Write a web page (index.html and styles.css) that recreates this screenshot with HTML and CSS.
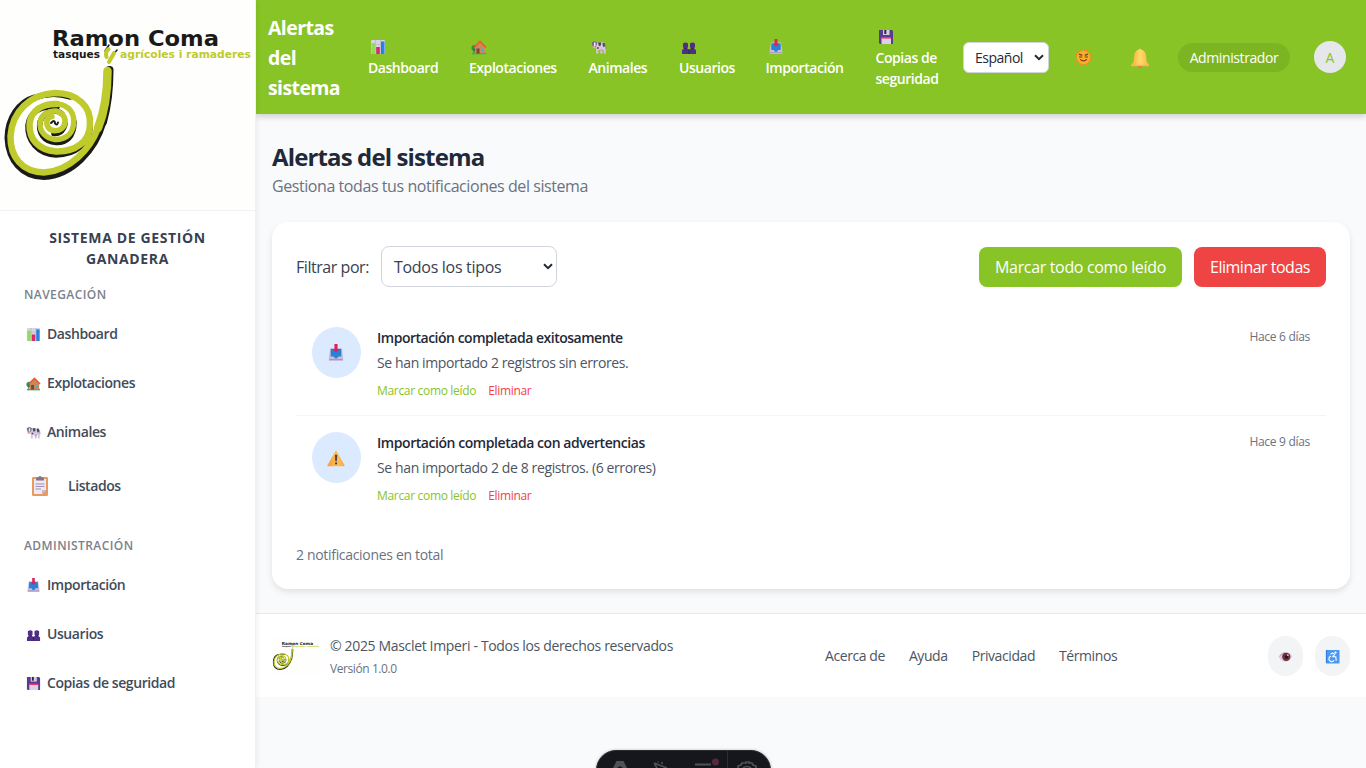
FILE: index.html
```html
<!DOCTYPE html>
<html lang="es">
<head>
<meta charset="utf-8">
<title>Alertas del sistema</title>
<link rel="stylesheet" href="styles.css">
</head>
<body>
<svg class="defs" width="0" height="0" aria-hidden="true">
  <defs>
    <linearGradient id="gold" x1="0" x2="1"><stop offset="0" stop-color="#f5a83c"/><stop offset=".5" stop-color="#ffdb68"/><stop offset="1" stop-color="#fbb34a"/></linearGradient>
    <linearGradient id="amber" x1="0" x2="1"><stop offset="0" stop-color="#f79a3e"/><stop offset=".6" stop-color="#ffc050"/><stop offset="1" stop-color="#fba445"/></linearGradient>
    <linearGradient id="blue" x1="0" x2="1"><stop offset="0" stop-color="#2f78cf"/><stop offset="1" stop-color="#1d8df0"/></linearGradient>
  </defs>
  <symbol id="chart" viewBox="0 0 16 16"><rect x="1" y="1" width="14" height="14" rx="1" fill="#d8d2e2"/><path d="M1 5.500h14M1 10h14M5.500 1v14M10.500 1v14" stroke="#b9b0c8" stroke-width=".6"/><rect x="1.500" y="4" width="3.500" height="11" fill="#8fdc5c"/><rect x="6.200" y="8" width="3.600" height="7" fill="#d8286f"/><rect x="11" y="2.500" width="3.500" height="12.500" fill="url(#blue)"/></symbol>
  <symbol id="house" viewBox="0 0 16 16"><circle cx="3.500" cy="9" r="3" fill="#2b8f53"/><path d="M3 10v5" stroke="#7b4d34"/><path d="M1 14.500h14" stroke="#35b26b" stroke-width="1.600"/><path d="M4 7.500 9 3l5 4.500V14H4z" fill="#c98a58"/><path d="M3 8.500 9 2.500l6 6" fill="none" stroke="#f0592b" stroke-width="1.700"/><rect x="5.500" y="9.500" width="3" height="5" fill="#7d4533"/><rect x="10" y="9.500" width="2.800" height="3" fill="#43b2e8"/></symbol>
  <symbol id="cow" viewBox="0 0 16 16"><path d="M5 3.500h8.500l1.200 3.500v7.500h-2V11h-1l-.5 3.500H9.300V11H7.300v3.500H5.200V9.500L4 7z" fill="#d3c8dd"/><path d="M.8 3.500 2.500 2.500h2L6.300 3.500 5.500 6.500 3.800 9 1.800 8z" fill="#776a82"/><path d="M3 3.500h1.500V7H3z" fill="#f4ecf8"/><path d="M1.500 7h2.800v2.200H2z" fill="#e7a0b8"/><path d="M7 3.500h3v2.800L8 7.300zM11.500 4h2.300v3.800H12zM6 8.300h1.800v1.500H6z" fill="#4a4354"/><path d="M14.300 5 15 10" stroke="#8c8098" stroke-width=".8"/><circle cx="10.500" cy="11.200" r="1.100" fill="#e88baf"/></symbol>
  <symbol id="users" viewBox="0 0 16 16"><path d="M2 4.500Q4.500 2.500 7 4.500V8l-.8 1.500L8 10.500l1.800-1L9 8V4.500q2.500-2 5 0V8l-.8 1.500 1.800 1.800V15H1v-3.700l1.800-1.800L2 8z" fill="#4f2f86"/><path d="M8 10.500V15M3.500 9.500h2M10.500 9.500h2" stroke="#2f1a58" stroke-width=".8"/></symbol>
  <symbol id="inbox" viewBox="0 0 16 16"><path d="M3 3.500h10l1.300 8V15H1.700v-3.500z" fill="#c9bddb"/><path d="M3.300 4.500h9.400V11h-2.700l-1 1.700H7L6 11H3.300z" fill="#2383d9"/><path d="M2 13.700h12" stroke="#a897c2"/><path d="M6.600 0h2.800v4.500h1.800L8 7.800 4.800 4.500h1.800z" fill="#dc235e"/></symbol>
  <symbol id="disk" viewBox="0 0 16 16"><path d="M1 1h13l1 1v13H2l-1-1z" fill="#593b91"/><path d="M5 1h6.500v5H5z" fill="#d5cbe0"/><path d="M6.300 1h2v4h-2z" fill="#30234a"/><path d="M3.500 9h9.500v6H3.500z" fill="#ddd0e9"/><path d="M3.500 8h9.500v1.600H3.500z" fill="#f03369"/></symbol>
  <symbol id="clipboard" viewBox="0 0 18 20"><rect x="1" y="1" width="16" height="19" rx="1.300" fill="#e89b61"/><path d="M3 3h12v11l-4 4H3z" fill="#eee9f5"/><path d="M11 18v-4h4z" fill="#c7b5d6"/><path d="M5 3q0-2 2.500-2 1.500-2 3 0Q13 1 13 3v1.500H5z" fill="#807687"/><path d="M4.500 8h9M4.500 10.500h9M4.500 13h5.500" stroke="#9587aa" stroke-width=".9"/></symbol>
  <symbol id="sun" viewBox="0 0 16 16"><circle cx="8" cy="8" r="6.700" fill="none" stroke="#f38b23" stroke-width="2.200" stroke-dasharray="3.600 1.660"/><circle cx="8" cy="8" r="6.300" fill="#fbac2b"/><path d="M3.800 4.800 6.800 6M12.200 4.800 9.200 6M3.800 7.500h3M9.200 7.500h3M4.800 9.800q3.200 2.700 6.400 0" fill="none" stroke="#6e3f1b" stroke-width="1.100"/></symbol>
  <symbol id="bell" viewBox="0 0 20 20"><circle cx="10" cy="18" r="2" fill="#f4686b"/><path d="M9 1.500q1-2 2 0 4.500 1 5 6l.7 6.500 2.300 2.500V18H1v-1.500L3.500 14l.7-6.500q.5-5 4.800-6z" fill="url(#gold)"/><path d="M1 17.500h18" stroke="#ffb45b" stroke-width="1.400"/></symbol>
  <symbol id="warning" viewBox="0 0 18 18"><path d="M9 1.300 17.700 16.500q0 .8-1 .8H1.300q-1 0-1-.8z" fill="url(#amber)"/><path d="M8 5.800h2.200l-.4 6.500H8.300z" fill="#493a58"/><circle cx="9.100" cy="14.400" r="1.100" fill="#493a58"/></symbol>
  <symbol id="eye" viewBox="0 0 16 16"><path d="M1 8.500q1.500-5 7-5T15 8q-2 5.500-7 5.500T1 8.500z" fill="#d9cee3"/><path d="M1.500 8q2-4 6.500-4" fill="none" stroke="#b59bc0"/><circle cx="8.800" cy="8.300" r="4.400" fill="#753036"/><circle cx="9" cy="8.500" r="1.900" fill="#241723"/><circle cx="10.500" cy="6.500" r="1" fill="#e5c9ce"/></symbol>
  <symbol id="wheelchair" viewBox="0 0 16 16"><rect x="1" y="1" width="14.500" height="14.500" rx="1" fill="#4898f4"/><path d="M1.500 1v14" stroke="#337bd3"/><circle cx="11.200" cy="3.800" r="1.200" fill="#fff"/><path d="M6 5.500 8 4.200l2.300 1.500-2 2.600h3.200l.5 4.200M6.500 7.500a3 3 0 1 0 3.200 4.500" fill="none" stroke="#fff" stroke-width="1.200"/></symbol>
  <symbol id="logo" viewBox="0 0 256 210">
    <rect width="255" height="210" fill="#fefefd"/>
    <text class="brand-name" x="52" y="46" textLength="167" lengthAdjust="spacingAndGlyphs">Ramon Coma</text>
    <text class="brand-sub" x="53" y="57.500" textLength="47" lengthAdjust="spacingAndGlyphs">tasques</text>
    <text class="brand-sub brand-green" x="120" y="57.500" textLength="131" lengthAdjust="spacingAndGlyphs">agrícoles i ramaderes</text>
    <g fill="none" stroke-linecap="round" stroke-linejoin="round">
      <path stroke="#1a1a19" stroke-width="8" d="M109.500 70C109.500 86 108 104 103 122"/>
      <path stroke="#1a1a19" stroke-width="7" d="M103 122C95 150 72 175 44 176.500C22 176 9 160 8 138C8 118 20 102 34 98"/>
      <path stroke="#1a1a19" stroke-width="5.500" d="M34 98Q52 91 70 97M90 122C92 144 74 155 56 155C38 154 27 141 28 125C30 111 42 106 57 107M74 122C74 137 66 143 56 142.500C44 142 38 133 40 122C43 112 55 108 62 114M65 124C63 132 58 134 54 133.500"/>
      <path stroke="#bfcb2c" stroke-width="8.500" d="M107.500 71C107.500 88 106 108 98 128"/>
      <path stroke="#bfcb2c" stroke-width="6.500" d="M98 128C90 149 70 171 44 172.500C22 172 10 157 10.500 136C12 112 30 94 55 93C78 93 91 107 90 124C90 142 75 152 56 151.500C38 150 29 139 29.500 124C31 110 43 103.500 57 104"/>
      <path stroke="#bfcb2c" stroke-width="5.500" d="M57 104C70 105 75 114 73.500 125C72 136 63 140 55 139.500C45 138 39.500 131 40 123C41 114 49 110.500 56 111C64 113 67 120 64 126C60 132 51 132 48 127C45 121 48 117 52 116.500"/>
      <path stroke="#1a1a19" stroke-width="2" d="M51 123q4-4 4 .5 2 2.500 3-1"/>
      <path stroke="#1a1a19" stroke-width="1.500" d="M105 51 109 45M112 56 117 50"/>
      <path stroke="#bfcb2c" stroke-width="4" d="M106.500 57Q105 52 108.500 49M109 62 114 53"/>
    </g>
  </symbol>
</svg>

<div class="app">
  <aside class="sidebar">
    <div class="sidebar-logo"><svg width="256" height="210"><use href="#logo"/></svg></div>
    <h2 class="sidebar-title">Sistema de Gestión<br>Ganadera</h2>
    <h3 class="group-label">Navegación</h3>
    <nav class="side-nav">
      <a class="side-link"><svg><use href="#chart"/></svg><span>Dashboard</span></a>
      <a class="side-link"><svg><use href="#house"/></svg><span>Explotaciones</span></a>
      <a class="side-link"><svg><use href="#cow"/></svg><span>Animales</span></a>
      <a class="side-link side-link-large"><svg><use href="#clipboard"/></svg><span>Listados</span></a>
    </nav>
    <h3 class="group-label group-admin">Administración</h3>
    <nav class="side-nav">
      <a class="side-link"><svg><use href="#inbox"/></svg><span>Importación</span></a>
      <a class="side-link"><svg><use href="#users"/></svg><span>Usuarios</span></a>
      <a class="side-link"><svg><use href="#disk"/></svg><span>Copias de seguridad</span></a>
    </nav>
  </aside>

  <div class="content">
    <header class="topbar">
      <div class="topbar-title">Alertas del sistema</div>
      <nav class="top-nav">
        <a class="top-link"><svg><use href="#chart"/></svg><span>Dashboard</span></a>
        <a class="top-link"><svg><use href="#house"/></svg><span>Explotaciones</span></a>
        <a class="top-link"><svg><use href="#cow"/></svg><span>Animales</span></a>
        <a class="top-link"><svg><use href="#users"/></svg><span>Usuarios</span></a>
        <a class="top-link"><svg><use href="#inbox"/></svg><span>Importación</span></a>
        <a class="top-link"><svg><use href="#disk"/></svg><span>Copias de<br>seguridad</span></a>
      </nav>
      <div class="select select-lang"><span>Español</span><svg class="chevron" viewBox="0 0 10 7"><path d="M1 1.200 5 5.200 9 1.200"/></svg></div>
      <svg class="sun"><use href="#sun"/></svg>
      <svg class="bell"><use href="#bell"/></svg>
      <span class="role">Administrador</span>
      <span class="avatar">A</span>
    </header>

    <main class="main">
      <h1 class="page-title">Alertas del sistema</h1>
      <p class="page-subtitle">Gestiona todas tus notificaciones del sistema</p>
      <section class="card">
        <div class="toolbar">
          <span class="filter-label">Filtrar por:</span>
          <div class="select select-type"><span>Todos los tipos</span><svg class="chevron" viewBox="0 0 10 7"><path d="M1 1.200 5 5.200 9 1.200"/></svg></div>
          <button class="btn btn-read">Marcar todo como leído</button>
          <button class="btn btn-delete">Eliminar todas</button>
        </div>
        <article class="notice">
          <div class="notice-icon"><svg><use href="#inbox"/></svg></div>
          <div class="notice-body">
            <h4 class="notice-title">Importación completada exitosamente</h4>
            <p class="notice-text">Se han importado 2 registros sin errores.</p>
            <div class="notice-actions"><a class="read">Marcar como leído</a><a class="delete">Eliminar</a></div>
          </div>
          <time class="notice-time">Hace 6 días</time>
        </article>
        <article class="notice">
          <div class="notice-icon"><svg><use href="#warning"/></svg></div>
          <div class="notice-body">
            <h4 class="notice-title">Importación completada con advertencias</h4>
            <p class="notice-text">Se han importado 2 de 8 registros. (6 errores)</p>
            <div class="notice-actions"><a class="read">Marcar como leído</a><a class="delete">Eliminar</a></div>
          </div>
          <time class="notice-time">Hace 9 días</time>
        </article>
        <p class="total">2 notificaciones en total</p>
      </section>
    </main>

    <footer class="footer">
      <svg class="footer-logo"><use href="#logo"/></svg>
      <div class="legal"><p class="copyright">© 2025 Masclet Imperi - Todos los derechos reservados</p><p class="version">Versión 1.0.0</p></div>
      <nav class="footer-nav"><a>Acerca de</a><a>Ayuda</a><a>Privacidad</a><a>Términos</a></nav>
      <div class="footer-tools"><span class="tool"><svg><use href="#eye"/></svg></span><span class="tool"><svg><use href="#wheelchair"/></svg></span></div>
    </footer>
  </div>
</div>

<div class="dev-bar">
  <svg width="175" height="18" viewBox="0 0 175 18" fill="none">
    <path d="M17 18l3-6q0-1 1-1h6q1 0 1 1l3 6h-4l-3-2-3 2z" fill="#505257"/>
    <path d="M58 13l13 5M58 13l3 5M62 12.500v-1M66 14v-2" stroke="#505257" stroke-width="1.600"/>
    <path d="M99 14.500h16" stroke="#505257" stroke-width="2"/><circle cx="119.500" cy="12" r="3.500" fill="#532b3b"/>
    <path d="M131.500 1v17" stroke="#2c2e33"/>
    <path d="M142 18v-2l3-1 1-2h4v-1h3v1h3l1 2 3 1v2M147 18q4-3 8 0" stroke="#505257" stroke-width="1.700"/>
  </svg>
</div>
</body>
</html>
```

FILE: styles.css
```css
* { box-sizing: border-box; margin: 0; }
body { height: 768px; overflow: hidden; background: #f9fafc; color: #1f2937; font-family: "Open Sans", "Noto Sans", sans-serif; font-size: 14px; line-height: 21px; }
svg { display: block; flex: none; overflow: visible; }
.defs { position: absolute; }
.app { display: flex; height: 768px; }

.sidebar { width: 256px; flex: none; background: #fff; border-right: 1px solid #f0f1f3; box-shadow: 0 0 6px rgba(0,0,0,.09); position: relative; z-index: 2; }
.sidebar-logo { height: 211px; overflow: hidden; border-bottom: 1px solid #f1f2f4; }
.brand-name { font: bold 22px "DejaVu Sans", sans-serif; fill: #1a1a19; }
.brand-sub { font: bold 11px "DejaVu Sans", sans-serif; fill: #1a1a19; }
.brand-green { fill: #bfcb2c; }
.sidebar-title { padding-top: 16px; text-align: center; text-transform: uppercase; font-size: 14px; font-weight: 700; color: #374151; letter-spacing: .63px; line-height: 21px; }
.group-label { margin-top: 17px; padding-left: 24px; font-size: 12px; line-height: 18px; font-weight: 600; text-transform: uppercase; color: #7b818c; letter-spacing: .42px; }
.side-nav { display: flex; flex-direction: column; gap: 4px; padding-top: 8px; }
.side-link { display: flex; align-items: center; gap: 6px; height: 45px; padding-left: 26px; font-weight: 600; color: #414b5a; letter-spacing: -.42px; }
.side-link span { padding-bottom: 2px; }
.side-link svg { width: 15px; height: 15px; }
.side-link-large { height: 54px; gap: 19px; padding-left: 31px; }
.side-link-large svg { width: 18px; height: 20px; }
.group-admin { margin-top: 24px; }

.content { flex: 1; min-width: 0; }
.topbar { display: flex; align-items: center; height: 114px; padding: 0 20px 0 12px; background: #88c425; color: #fff; box-shadow: 0 3px 6px rgba(0,0,0,.16); }
.topbar-title { width: 100px; padding: 2px 20px 0 0; font-size: 19.5px; line-height: 30px; font-weight: 700; letter-spacing: -.6px; flex: none; }
.top-nav { display: grid; grid-template-columns: 101px 119.500px 90.500px 86.500px 110px 87.500px; align-items: center; flex: none; }
.top-link { font-weight: 600; letter-spacing: -.45px; white-space: nowrap; }
.top-link svg { width: 16px; height: 16px; margin: 3px 0 2px 2px; }
.top-link span { display: block; }
.select { display: flex; align-items: center; justify-content: space-between; background: #fff; border: 1px solid #d1d5db; border-radius: 8px; flex: none; }
.select-lang { width: 86px; height: 31px; padding: 0 4px 0 11px; border-radius: 6px; color: #1f2937; letter-spacing: -.5px; }
.chevron { width: 10px; height: 7px; fill: none; stroke: #1f2937; stroke-width: 2; }
.sun { width: 17px; height: 17px; margin-left: 26px; }
.bell { width: 20px; height: 20px; margin-left: 38px; margin-top: 2px; }
.role { width: 112px; height: 29px; margin-left: 28px; border-radius: 15px; background: #7db422; line-height: 29px; text-align: center; letter-spacing: -.4px; }
.avatar { width: 32px; height: 32px; margin-left: 24px; border-radius: 50%; background: #e5e7eb; color: #88c425; line-height: 33px; text-align: center; }

.main { padding: 25px 16px 24px; }
.page-title { font-size: 24px; line-height: 36px; font-weight: 700; letter-spacing: -.87px; }
.page-subtitle { font-size: 16px; line-height: 24px; color: #6b7280; letter-spacing: -.43px; margin-top: -1px; }
.card { margin-top: 24px; height: 367px; padding: 24px; background: #fff; border-radius: 16px; box-shadow: 0 3px 6px rgba(0,0,0,.1); }
.toolbar { display: flex; align-items: center; height: 41px; font-size: 16px; margin-bottom: 24px; }
.filter-label { width: 85px; padding-top: 2px; color: #374151; letter-spacing: -.45px; white-space: nowrap; }
.select-type { width: 176px; height: 41px; padding: 0 3px 0 12px; margin-right: auto; color: #374151; letter-spacing: -.3px; }
.select-type span { padding-top: 2px; }
.btn { height: 40px; margin-left: 12px; padding: 2px 0 0; border: 0; border-radius: 8px; font: inherit; color: #fff; white-space: nowrap; }
.btn-read { width: 203px; background: #88c425; letter-spacing: -.34px; }
.btn-delete { width: 132px; background: #ef4444; letter-spacing: -.5px; }
.notice { display: flex; height: 105px; padding: 16px; border-bottom: 1px solid #f3f4f6; }
.notice + .notice { border-bottom: 0; }
.notice-icon { width: 49px; height: 51px; padding-right: 1px; margin-right: 16px; border-radius: 50%; background: #dbeafe; display: grid; place-items: center; flex: none; }
.notice-icon svg { width: 18px; height: 18px; }
.notice-body { flex: 1; }
.notice-title { font-size: 14px; line-height: 21px; font-weight: 600; letter-spacing: -.49px; }
.notice + .notice .notice-title { letter-spacing: -.44px; }
.notice-text { margin-top: 4px; color: #4b5563; letter-spacing: -.38px; }
.notice-actions { display: flex; gap: 12px; margin-top: 9px; font-size: 12px; line-height: 18px; letter-spacing: -.32px; }
.read { color: #88c425; }
.delete { color: #ef4444; }
.notice-time { padding-top: 1px; font-size: 12px; line-height: 18px; color: #6b7280; letter-spacing: -.3px; }
.total { margin-top: 23px; color: #6b7280; letter-spacing: -.32px; }

.footer { display: flex; align-items: center; height: 84px; padding: 0 16px; background: #fff; border-top: 1px solid #e5e7eb; }
.footer-logo { width: 48px; height: 40px; }
.legal { width: 495px; padding: 1px 0 0 10px; white-space: nowrap; }
.copyright { color: #4b5563; letter-spacing: -.34px; }
.version { margin-top: 4px; font-size: 12px; line-height: 18px; color: #6b7280; letter-spacing: -.42px; }
.footer-nav { display: flex; gap: 24px; margin-left: 10px; color: #4b5563; letter-spacing: -.42px; white-space: nowrap; }
.footer-tools { display: flex; gap: 12px; margin-left: auto; }
.tool { width: 35px; height: 40px; border-radius: 18px; background: #f3f4f6; display: grid; place-items: center; padding-top: 2px; }
.tool svg { width: 15px; height: 15px; }

.dev-bar { position: fixed; z-index: 5; left: 596px; top: 750px; width: 175px; height: 40px; border-radius: 20px; background: #15171c; border: 1px solid #2b2d33; box-shadow: 0 0 3px rgba(0,0,0,.25); }
.dev-bar svg { margin: -1px; }
```
